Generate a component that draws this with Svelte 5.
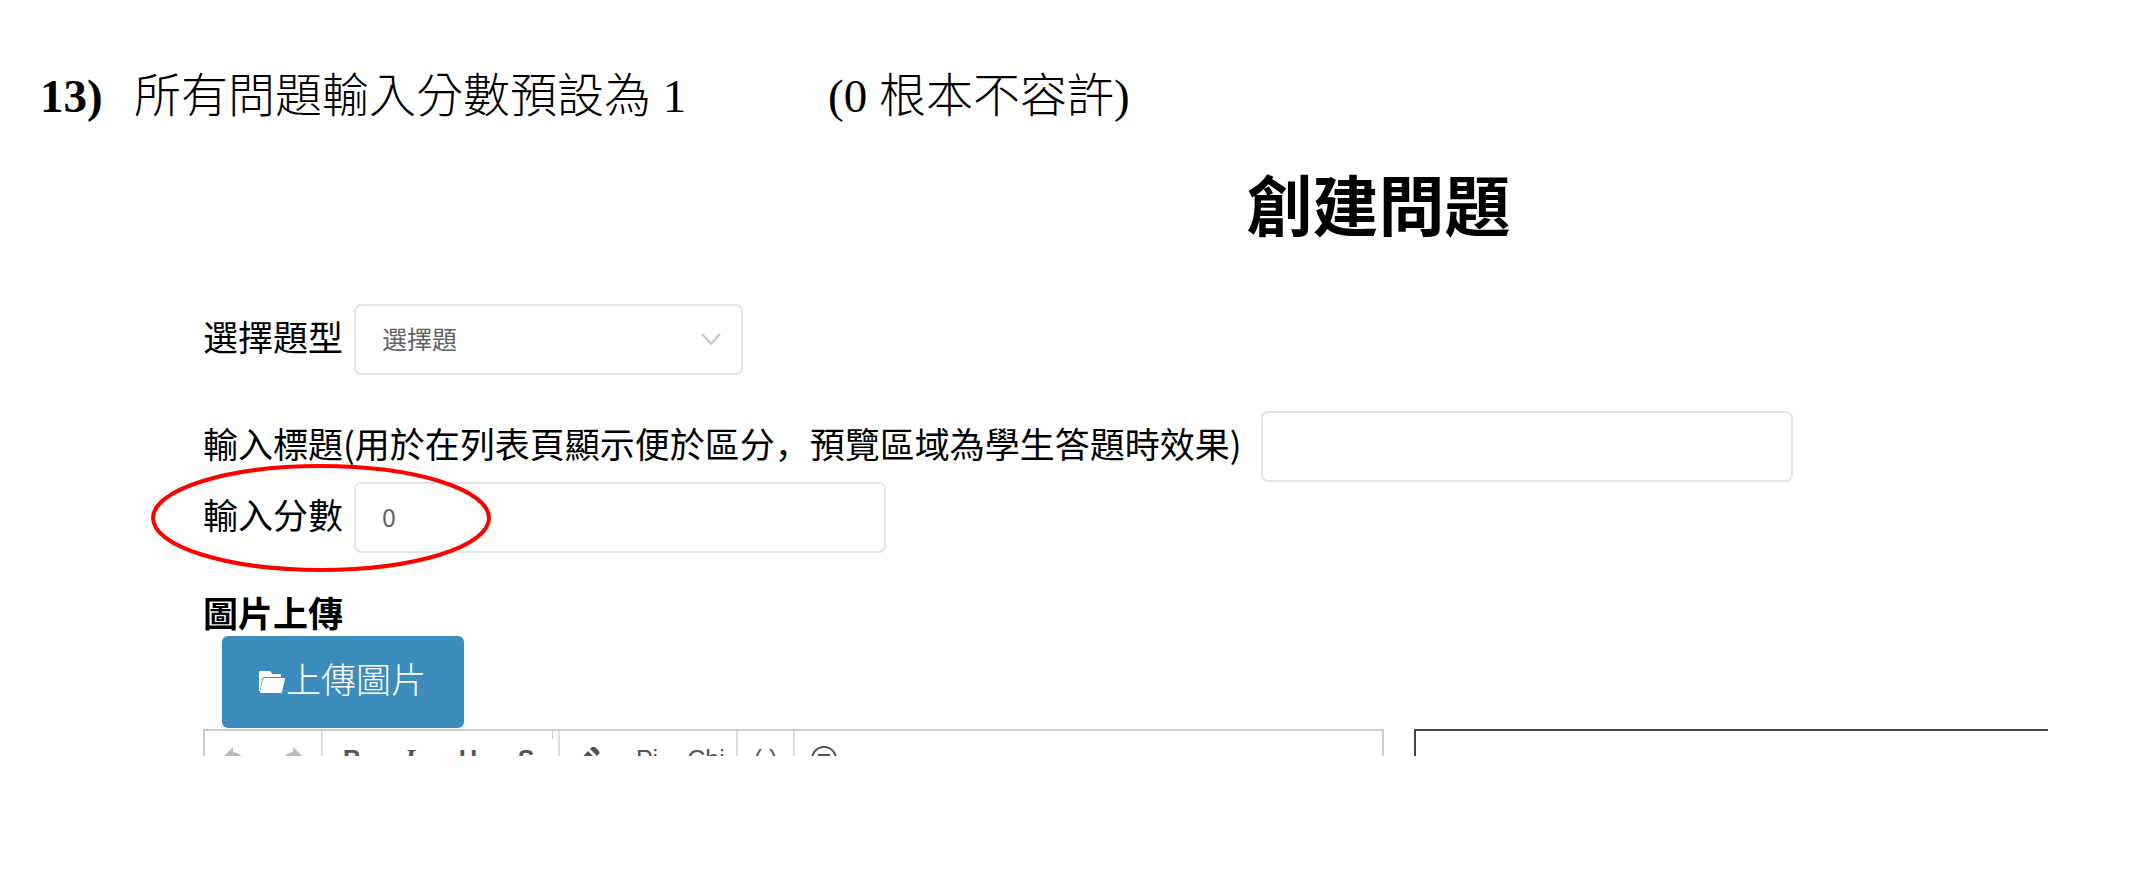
<script lang="ts">
	const questionTypes = ['選擇題', '填空題', '問答題'];

	let questionType = $state('選擇題');
	let title = $state('');
	let score = $state('0');
</script>

<main>
	<p class="note">
		<b>13)</b>
		<span class="request">所有問題輸入分數預設為 1</span>
		<span>(0 根本不容許)</span>
	</p>

	<div class="capture">
		<form class="page" onsubmit={(e) => e.preventDefault()}>
			<h1>創建問題</h1>

			<div class="field type">
				<label for="type">選擇題型</label>
				<div class="select">
					<select id="type" bind:value={questionType}>
						{#each questionTypes as type}
							<option value={type}>{type}</option>
						{/each}
					</select>
					<svg class="chevron" viewBox="0 0 20 12"><path d="M1 1l9 10 9-10" /></svg>
				</div>
			</div>

			<div class="field long">
				<label for="title">輸入標題(用於在列表頁顯示便於區分&#65292;預覽區域為學生答題時效果)</label>
				<input id="title" type="text" bind:value={title} />
			</div>

			<div class="field">
				<label for="score">輸入分數</label>
				<input id="score" type="text" inputmode="numeric" bind:value={score} />
				<svg class="circled" viewBox="0 0 340 108" aria-hidden="true">
					<ellipse cx="170" cy="54" rx="168" ry="52" />
				</svg>
			</div>

			<h2>圖片上傳</h2>
			<button type="button" class="upload">
				<svg viewBox="0 0 28 24" aria-hidden="true">
					<path d="M1 21V2q0-1 1-1h9q1 0 2 1l1 2h8q1 0 1 1v2H7q-2 0-3 2L2 21z" />
					<path d="M7 8h19q1 0 1 1l-3 13q0 1-1 1H3q-1 0-1-1L5 9q1-1 2-1z" />
				</svg>上傳圖片
			</button>

			<div class="panels">
				<div class="editor">
					<div class="group history">
						<button type="button" aria-label="undo">
							<svg viewBox="0 0 22 22"><path d="M0 10L10 0v5q11 1 12 15-4-6-12-5v5z" /></svg>
						</button>
						<button type="button" aria-label="redo">
							<svg viewBox="0 0 22 22"><path d="M22 10L12 0v5Q1 6 0 20q4-6 12-5v5z" /></svg>
						</button>
					</div>
					<div class="group style">
						<button type="button"><b>B</b></button>
						<button type="button"><i>I</i></button>
						<button type="button"><u>U</u></button>
						<button type="button"><s>S</s></button>
					</div>
					<div class="group insert">
						<button type="button" aria-label="pencil">
							<svg viewBox="0 0 24 24"><path d="M15 0q2-1 3 0l4 4q1 2 0 3l-2 2-7-7zM11 4l7 7L7 22l-7 2 1-9z" /></svg>
						</button>
						<button type="button">Pi</button>
						<button type="button">Chi</button>
					</div>
					<div class="group blank"><button type="button">( )</button></div>
					<div class="group last">
						<button type="button" aria-label="formula">
							<svg viewBox="0 0 28 28"><circle cx="14" cy="14" r="12" /><path d="M8 10h12M8 15h12M8 20h12" /></svg>
						</button>
					</div>
				</div>
				<div class="preview"></div>
			</div>
		</form>
	</div>
</main>

<style>
	:global(body) {
		margin: 0;
		background: #fff;
	}

	main {
		padding: 64px 96px 0 0;
		color: #000;
	}

	.note {
		display: flex;
		margin: 0;
		padding-left: 40px;
		font: 300 47px/64px 'Liberation Serif', 'Noto Sans CJK TC', serif;
	}

	.note b {
		width: 94px;
		font-weight: 700;
	}

	.request {
		width: 694px;
	}

	/* visible part of the page, cut off at the right and below the toolbar */
	.capture {
		padding-left: 152px;
		overflow: hidden;
	}

	.page {
		width: 124%;
		padding-left: 51px;
		font: 400 35px/48px 'Noto Sans CJK SC', sans-serif;
	}

	h1 {
		margin: 25px 0 53px;
		font-size: 66px;
		line-height: 98px;
		text-align: center;
	}

	.field {
		position: relative;
		display: flex;
		align-items: center;
	}

	label {
		flex: 0 0 151px;
		padding-bottom: 8px;
		box-sizing: border-box;
		white-space: nowrap;
	}

	.type {
		margin-bottom: 36px;
	}

	.long label {
		flex-basis: 45%;
	}

	select,
	.field input {
		box-sizing: border-box;
		width: 532px;
		height: 71px;
		padding: 0 26px 4px;
		border: 2px solid #e2e4ec;
		border-radius: 7px;
		background: #fff;
		color: #606266;
		font: 400 25px 'Noto Sans CJK SC', sans-serif;
		outline: none;
	}

	.select {
		position: relative;
	}

	select {
		display: block;
		width: 389px;
		appearance: none;
	}

	.chevron {
		position: absolute;
		top: 29px;
		right: 22px;
		width: 20px;
		height: 12px;
		fill: none;
		stroke: #c0c4cc;
		stroke-width: 2;
		pointer-events: none;
	}

	.circled {
		position: absolute;
		top: -18px;
		left: -52px;
		width: 340px;
		height: 108px;
		fill: none;
		stroke: #f00;
		stroke-width: 4;
		pointer-events: none;
	}

	h2 {
		margin: 35px 0 0;
		font-size: 35px;
		line-height: 48px;
	}

	.upload {
		display: flex;
		align-items: center;
		height: 92px;
		margin-left: 19px;
		padding: 0 38px 10px 36px;
		border: 0;
		border-radius: 6px;
		background: #3c8dbc;
		color: #fff;
		font: 300 35px 'Noto Sans CJK SC', sans-serif;
	}

	.upload svg {
		width: 28px;
		height: 24px;
		margin-top: 10px;
		fill: #fff;
	}

	.panels {
		display: flex;
		gap: 30px;
		height: 27px;
		margin-top: 1px;
		overflow: hidden;
	}

	.editor {
		box-sizing: border-box;
		display: flex;
		flex: 0 0 calc(50% + 5px);
		height: 80px;
		border: 2px solid #ccc;
	}

	.preview {
		box-sizing: border-box;
		flex: 1;
		height: 80px;
		border: 2px solid #444;
	}

	.group {
		display: flex;
		align-items: flex-start;
		padding-top: 12px;
		box-sizing: border-box;
		border-right: 2px solid #ddd;
	}

	.group button {
		display: flex;
		justify-content: center;
		width: 58px;
		padding: 0;
		border: 0;
		background: none;
		color: #555;
		font: 25px/32px 'Liberation Sans', sans-serif;
	}

	.style {
		position: relative;
		padding-right: 3px;
	}

	/* short tick left of the divider */
	.style::after {
		content: '';
		position: absolute;
		top: 0;
		right: 5px;
		width: 1px;
		height: 8px;
		background: #ccc;
	}

	.group.style button {
		font-weight: 700;
	}

	.style i {
		font-family: 'Liberation Serif', serif;
		font-size: 27px;
	}

	.group svg {
		width: 24px;
		height: 24px;
		fill: #555;
	}

	.group.history svg {
		width: 22px;
		height: 22px;
		margin-top: 4px;
		fill: #bbb;
	}

	.insert svg {
		margin-top: 4px;
	}

	.group.insert button:last-child {
		width: 60px;
	}

	.group.blank button {
		width: 55px;
	}

	.group.last {
		border: 0;
	}

	.group.last svg {
		width: 28px;
		height: 28px;
		margin-top: 2px;
		fill: none;
		stroke: #555;
		stroke-width: 2;
	}
</style>
